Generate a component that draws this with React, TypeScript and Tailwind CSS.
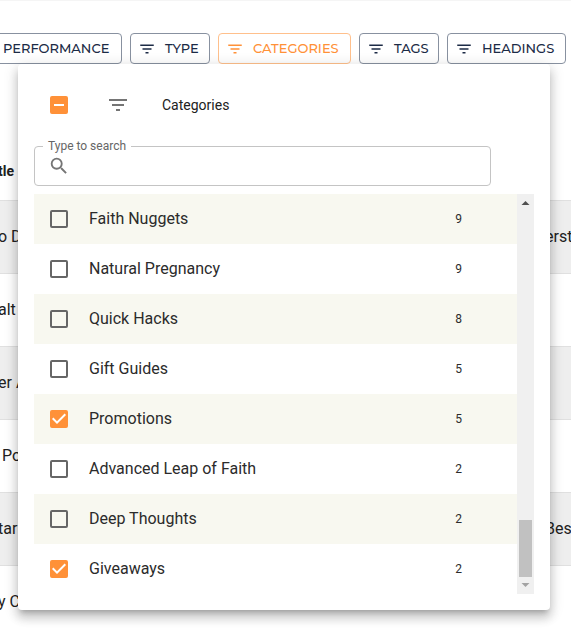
import React, { useState } from 'react'
import { MdFilterList, MdSearch } from 'react-icons/md'
import clsx from 'clsx'

const filters = [
  { label: 'PERFORMANCE', width: 'w-[154px]' },
  { label: 'TYPE', width: 'w-20' },
  { label: 'CATEGORIES', width: 'w-[133px]' },
  { label: 'TAGS', width: 'w-20' },
  { label: 'HEADINGS', width: 'w-[119px]' },
]

const initialCategories = [
  { name: 'Faith Nuggets', count: 9, checked: false },
  { name: 'Natural Pregnancy', count: 9, checked: false },
  { name: 'Quick Hacks', count: 8, checked: false },
  { name: 'Gift Guides', count: 5, checked: false },
  { name: 'Promotions', count: 5, checked: true },
  { name: 'Advanced Leap of Faith', count: 2, checked: false },
  { name: 'Deep Thoughts', count: 2, checked: false },
  { name: 'Giveaways', count: 2, checked: true },
]

const rows = [
  { title: 'o D', heading: 'erst' },
  { title: 'alt', heading: '' },
  { title: 'er A', heading: '' },
  { title: ' Po', heading: '' },
  { title: 'tar', heading: 'Bes' },
  { title: 'y C', heading: '' },
]

type CheckboxProps = {
  id: string
  checked: boolean
  indeterminate?: boolean
  onChange: () => void
}

function Checkbox({ id, checked, indeterminate, onChange }: CheckboxProps) {
  const filled = checked || indeterminate

  return (
    <span className="relative block size-[18px] shrink-0">
      <input
        id={id}
        type="checkbox"
        checked={checked}
        onChange={onChange}
        className={clsx(
          'block size-[18px] cursor-pointer appearance-none rounded-xs border-2',
          filled ? 'border-[#ff9138] bg-[#ff9138]' : 'border-[#666]'
        )}
      />
      {filled && (
        <svg viewBox="3 3 18 18" className="pointer-events-none absolute inset-0 size-[18px] fill-white">
          {indeterminate ? (
            <path d="M7 11h10v2H7z" />
          ) : (
            <path d="M10 17l-5-5 1.41-1.41L10 14.17l7.59-7.59L19 8l-9 9z" />
          )}
        </svg>
      )}
    </span>
  )
}

export default function App() {
  const [categories, setCategories] = useState(initialCategories)
  const [search, setSearch] = useState('')

  const allChecked = categories.every(c => c.checked)
  const someChecked = categories.some(c => c.checked) && !allChecked

  const toggle = (name: string) =>
    setCategories(categories.map(c => (c.name === name ? { ...c, checked: !c.checked } : c)))

  const toggleAll = () => setCategories(categories.map(c => ({ ...c, checked: !allChecked })))

  return (
    <div className="relative h-screen min-h-[632px] overflow-hidden border-t border-[#f5f5f5] bg-white font-['Roboto',sans-serif] text-[#212121]">
      {/* Filter buttons */}
      <div className="flex justify-end gap-2 pt-8 pr-[5px]">
        {filters.map(filter => (
          <button
            key={filter.label}
            className={clsx(
              "flex h-[31px] shrink-0 items-center gap-[9px] rounded border pl-[7px] font-['Montserrat','Inter',sans-serif] text-[13px] font-medium",
              filter.width,
              filter.label === 'CATEGORIES'
                ? 'border-[#ffc08c] text-[#ff9138]'
                : 'border-[#8891a0] text-[#1c2b46]'
            )}
          >
            <MdFilterList className="size-[18px]" />
            {filter.label}
          </button>
        ))}
      </div>

      <table className="mt-[79px] w-full table-fixed border-collapse text-left">
        <thead>
          <tr className="h-[57px] border-b border-[#e0e0e0] text-sm">
            <th className="p-0 -indent-0.5 font-bold">tle</th>
            <th className="w-[26px] p-0"></th>
          </tr>
        </thead>
        <tbody>
          {rows.map(row => (
            <tr key={row.title} className="h-[73px] border-b border-[#e0e0e0] odd:bg-[#eee]">
              <td className="p-0 -indent-0.5 whitespace-pre">{row.title}</td>
              <td className="p-0 whitespace-pre">{row.heading}</td>
            </tr>
          ))}
        </tbody>
      </table>

      {/* Categories popover */}
      <div className="absolute top-[63px] right-[21px] left-[18px] rounded bg-white p-4 shadow-[0_5px_5px_-3px_rgba(0,0,0,0.2),0_8px_10px_1px_rgba(0,0,0,0.14),0_3px_14px_2px_rgba(0,0,0,0.12)]">
        <div className="flex h-[50px] items-center pl-4">
          <Checkbox id="all" checked={allChecked} indeterminate={someChecked} onChange={toggleAll} />
          <MdFilterList className="ml-[38px] size-6 text-[#757575]" />
          <label htmlFor="all" className="ml-8 text-sm text-[#212121]">
            Categories
          </label>
        </div>

        <div className="relative mt-4 mr-[43px] flex h-10 items-center rounded border border-[#c4c4c4] pl-[13px]">
          <label
            htmlFor="search"
            className="absolute -top-[9px] left-2 bg-white px-[5px] text-xs leading-4 text-[#666]"
          >
            Type to search
          </label>
          <MdSearch className="size-[22px] text-[#757575]" />
          <input
            id="search"
            value={search}
            onChange={e => setSearch(e.target.value)}
            className="ml-2 h-8 min-w-0 flex-1 text-base outline-none"
          />
        </div>

        <div className="mt-2 flex">
          <ul className="flex-1">
            {categories.map(category => (
              <li key={category.name} className="flex h-[50px] items-center pr-[55px] pl-4 odd:bg-[#f8f8f0]">
                <Checkbox
                  id={category.name}
                  checked={category.checked}
                  onChange={() => toggle(category.name)}
                />
                <label htmlFor={category.name} className="ml-[21px] flex-1 text-base text-[#2b2b2b]">
                  {category.name}
                </label>
                <span className="text-xs text-[#2b2b2b]">{category.count}</span>
              </li>
            ))}
          </ul>

          {/* Scrollbar */}
          <div className="flex w-[17px] flex-col items-center bg-[#f0f0f0]">
            <svg viewBox="0 0 17 17" className="size-[17px] fill-[#505050]">
              <path d="M4.5 11 8.5 7l4 4z" />
            </svg>
            <div className="flex-1"></div>
            <div className="h-[57px] w-[13px] bg-[#c1c1c1]"></div>
            <svg viewBox="0 0 17 17" className="size-[17px] fill-[#a3a3a3]">
              <path d="M4.5 6h8l-4 4z" />
            </svg>
          </div>
        </div>
      </div>
    </div>
  )
}
